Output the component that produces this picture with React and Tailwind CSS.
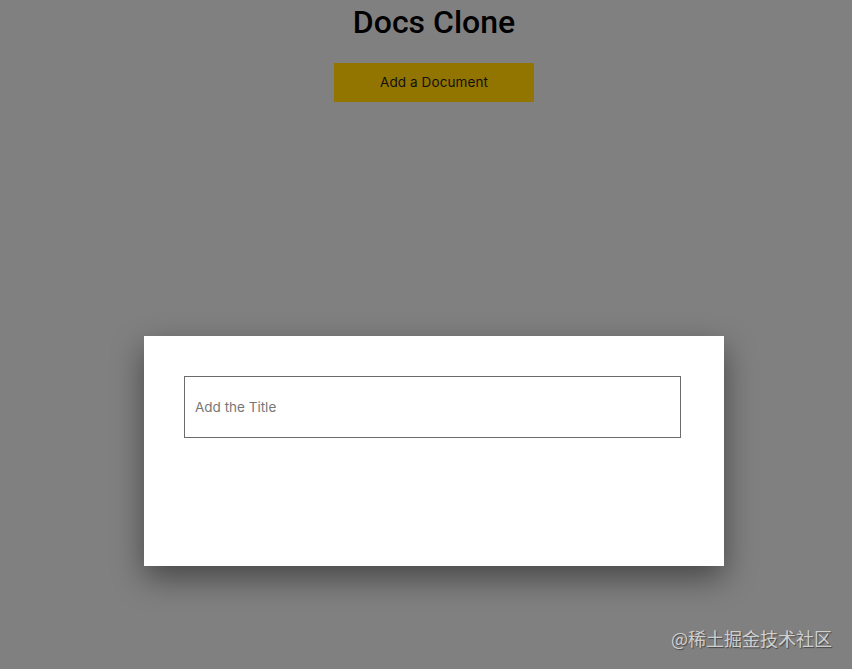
import React, { useState } from 'react';

const App = () => {
    const [title, setTitle] = useState('');

    return (
        <div className="relative min-h-[669px] w-full bg-[#808080] pl-[16px] font-['Inter','Noto_Sans',sans-serif]">
            {/* 헤더 */}
            <div className="flex flex-col items-center pt-[3px]">
                <h1 className="text-[32px] leading-[38px] font-medium text-black font-['Roboto',sans-serif]">
                    Docs Clone
                </h1>
                <button className="mt-[22px] h-[39px] w-[200px] bg-[#927400] text-[13.5px] text-[#111] tracking-[0.1px]">
                    Add a Document
                </button>
            </div>

            {/* 모달 */}
            <div className="absolute left-[144px] top-[336px] h-[230px] w-[580px] bg-white px-[40px] pt-[40px] shadow-[0_12px_30px_rgba(0,0,0,0.45)]">
                <input
                    type="text"
                    value={title}
                    onChange={(e) => setTitle(e.target.value)}
                    placeholder="Add the Title"
                    className="h-[62px] w-[497px] border border-[#6b6b6b] px-[10px] text-[13.5px] text-[#333] outline-none placeholder:text-[#777]"
                />
            </div>

            <div className="absolute right-[20px] top-[625px] text-[18px] text-[#cfcfcf] [text-shadow:1px_1px_1px_rgba(0,0,0,0.45)] font-['Noto_Sans_CJK_SC',sans-serif]">
                @稀土掘金技术社区
            </div>
        </div>
    );
};

export default App;
